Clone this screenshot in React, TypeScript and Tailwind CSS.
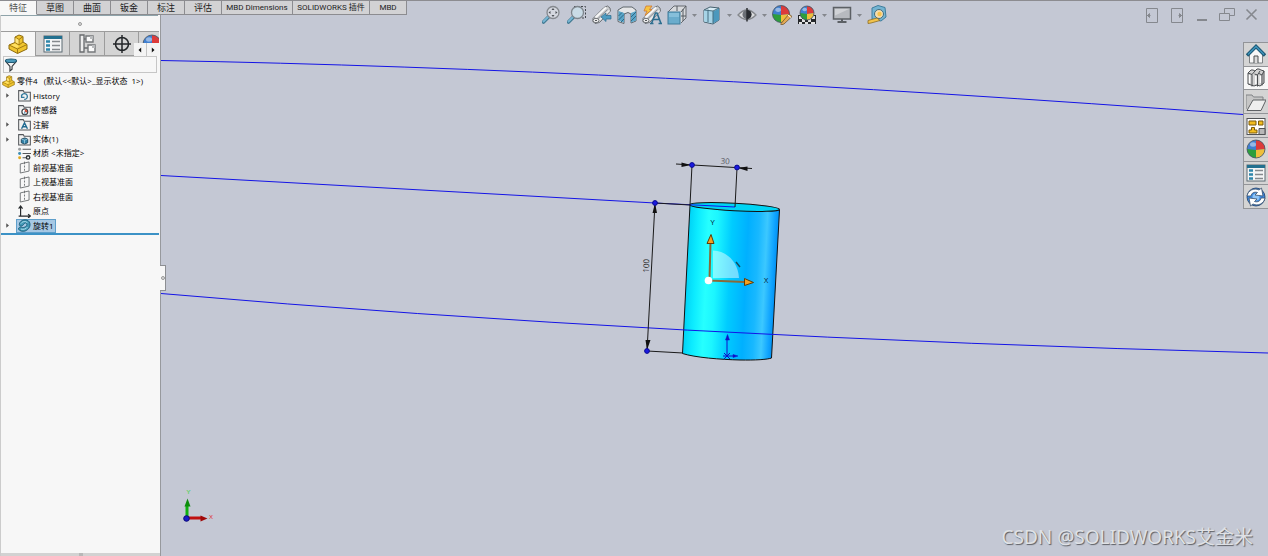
import { useState } from "react";
import type { ReactNode } from "react";

const commandTabs = [
  { label: "特征", width: "w-[37px]" },
  { label: "草图", width: "w-[37px]" },
  { label: "曲面", width: "w-[37px]" },
  { label: "钣金", width: "w-[37px]" },
  { label: "标注", width: "w-[37px]" },
  { label: "评估", width: "w-[37px]" },
  { label: "MBD Dimensions", width: "w-[71px]", latin: true },
  { label: "SOLIDWORKS 插件", width: "w-[77px]", latin: true },
  { label: "MBD", width: "w-[37px]", latin: true },
];

function Icon({ children, size = "size-5" }: { children: ReactNode; size?: string }) {
  return (
    <svg viewBox="0 0 20 20" className={`${size} shrink-0`} fill="none" aria-hidden="true">
      {children}
    </svg>
  );
}

/* shared drawings */

const Paper = () => (
  <>
    <path d="M1 13.500 12 2.500 15.500 1l2.500 2 .5 3L7.500 17.500l-4.500 1-2-2z" fill="#c9cbce" stroke="#6f7276" />
    <path d="M3.500 12.500 14 2.500" stroke="#f8f8f8" strokeWidth="2" />
    <path d="M7 15.500 17.500 5.500" stroke="#f0f0f0" strokeWidth="1.500" />
    <path d="M5 14.500 15.500 4.500" stroke="#8d9095" />
    <ellipse cx="4" cy="15.500" rx="3" ry="2.200" fill="#eeeeee" stroke="#6f7276" />
    <path d="M3 15.500h2" stroke="#55585c" />
  </>
);

const Ball = ({ cx = 10, cy = 10, r = 9 }: { cx?: number; cy?: number; r?: number }) => (
  <>
    <circle cx={cx} cy={cy} r={r} fill="#3f7fd0" />
    <path d={`M${cx} ${cy - r}A${r} ${r} 0 0 1 ${cx + r} ${cy}L${cx} ${cy + 1}z`} fill="#dc3b3b" />
    <path d={`M${cx + r} ${cy}A${r} ${r} 0 0 1 ${cx} ${cy + r}V${cy + 1}z`} fill="#eebf3c" />
    <path d={`M${cx} ${cy + r}A${r} ${r} 0 0 1 ${cx - r} ${cy}L${cx} ${cy + 1}z`} fill="#2d9e3c" />
    <ellipse cx={cx - r / 3} cy={cy - r / 2} rx={r / 3} ry={r / 4} fill="#fff" opacity=".45" />
    <circle cx={cx} cy={cy} r={r} stroke="#4c5560" strokeWidth=".8" />
  </>
);

const PartShape = () => (
  <>
    <path d="M1 11 7 8.500V3L11 1l4 1.500v5.500l4 2.500v4.500L9.500 19.500 1 15z" fill="#f0c52f" stroke="#8d6a0c" />
    <path d="M7 3 11 5.500l4-3M11 5.500V11M7 8.500 11 11l4-3M1 11l8.500 4L19 10.500M9.500 15v4.500" stroke="#a07b14" />
    <path d="M7.500 4l3 1.800V10L7.500 8.200z" fill="#ffe680" />
    <path d="M3 11l4-1.500 4 2.500-2 2z" fill="#ffe062" />
  </>
);

const FolderShape = () => (
  <path d="M1 18.500V2.500h7L9.500 5H19v13.500z" fill="#f2f2f2" stroke="#55585c" strokeWidth="1.600" />
);

const PropertyShape = () => (
  <>
    <rect x="1" y="2" width="18" height="16" fill="#f4f5f6" stroke="#5d6a73" />
    <path d="M1 3.500h18" stroke="#23708f" strokeWidth="3" />
    <path d="M3 7.500h4M3 11.500h4M3 15.500h4" stroke="#2f86ab" strokeWidth="2.600" />
    <path d="M9 7.500h8M9 11.500h8M9 15.500h8" stroke="#85898d" strokeWidth="1.300" />
  </>
);

const LensHandle = () => (
  <>
    <path d="M1.500 17 6.500 12" stroke="#3f7891" strokeWidth="3.600" strokeLinecap="round" />
    <path d="M1.500 16.500 6 12" stroke="#78b6d4" strokeWidth="2" strokeLinecap="round" />
  </>
);

/* heads-up view toolbar */

const viewTools = [
  {
    label: "整屏显示全图",
    icon: (
      <>
        <LensHandle />
        <circle cx="11" cy="7.500" r="6" fill="#d4d7df" stroke="#85898f" strokeWidth="1.300" />
        <path d="M11 3 9.500 5h3zM11 12 9.500 10h3zM6.500 7.500l2-1.500v3zM15.500 7.500l-2-1.500v3z" fill="#4c5056" />
      </>
    ),
  },
  {
    label: "局部放大",
    icon: (
      <>
        <path d="M7 1.500h11.500v11.500H15" stroke="#43474c" strokeDasharray="2 1.500" />
        <LensHandle />
        <circle cx="10.500" cy="7.500" r="6" fill="#c9dbe6" stroke="#7e858c" strokeWidth="1.300" />
      </>
    ),
  },
  {
    label: "上一视图",
    icon: (
      <>
        <Paper />
        <path d="M9 12l5-4v2.500h5v3.500h-5V16.500z" fill="#4f9cc2" stroke="#2d6c8c" strokeWidth=".7" />
      </>
    ),
  },
  {
    label: "剖面视图",
    icon: (
      <>
        <path d="M1 5 6 2h9l4 3v11l-5 2V9l-3-1.500L7 9v9.500l-6-2z" fill="#e4e5e7" stroke="#5f676d" />
        <path d="M1.500 6 7 8v9.500l-5.500-2zM14 8l5-2v9.500l-5 2z" fill="#5ba5c8" />
        <path d="M1.500 11 5 7.500M1.500 15 7 9.500M4 17l3-3M14 12l5-5M14 16l5-5" stroke="#2c6986" />
      </>
    ),
  },
  {
    label: "动态注解视图",
    icon: (
      <>
        <Paper />
        <path d="M4 1h6L7.500 4.500H10L3 10.500 5 6H2z" fill="#f6c443" stroke="#d17932" strokeWidth=".8" />
        <path d="M9.500 18.500 13.500 8h1.500l4 10.500M11 14.500h6.500M8 18.500h3.500M16.500 18.500H20" stroke="#2d6e8f" strokeWidth="1.600" />
      </>
    ),
  },
  {
    label: "视图定向",
    menu: true,
    icon: (
      <>
        <path d="M1 7 7 1h12v12l-5 5" fill="#d7d9dc" stroke="#666b71" />
        <path d="M14 7l5-6M10 1v5M14 11h5M16 4v12" stroke="#555a60" />
        <rect x="1" y="7" width="12" height="12" fill="#6aaccc" stroke="#3f7c9b" />
        <path d="M2 8h10v4H2z" fill="#86bfda" />
      </>
    ),
  },
  {
    label: "显示样式",
    menu: true,
    icon: (
      <>
        <path d="M2 5 8 2l9 1v12l-6 4-9-2z" fill="#d9edf6" stroke="#46606e" />
        <path d="M2 5l9 1v12.500L2 16.500z" fill="#a6d3e6" />
        <path d="M11 6.500 17 3.500V15l-6 3.500z" fill="#4b98bd" />
        <path d="M2 5l9 1 6-3M11 6v13M6 4.500v13" stroke="#476f82" />
      </>
    ),
  },
  {
    label: "隐藏/显示项目",
    menu: true,
    icon: (
      <>
        <path d="M1 10Q10 0 19 10 10 19 1 10z" fill="#dadbdd" stroke="#85888d" strokeWidth="1.300" />
        <circle cx="10" cy="9.500" r="4.500" fill="#6c7076" />
        <path d="M10 3v13.500" stroke="#2c2f33" strokeWidth="1.500" />
        <path d="M10 5a4.500 4.500 0 0 1 0 9" fill="#292c31" />
      </>
    ),
  },
  {
    label: "编辑外观",
    icon: (
      <>
        <Ball cx={9} cy={9} r={8.5} />
        <path d="M9 18.500 17 9l3 2.500-8 7.500-3 1z" fill="#e4aa55" stroke="#6f5530" strokeWidth=".8" />
        <path d="M16 10l3 2.500" stroke="#fff" />
      </>
    ),
  },
  {
    label: "应用布景",
    menu: true,
    icon: (
      <>
        <path d="M1 10h18v9H1z" fill="#25282b" />
        <path d="M2 11h3v3H2zM15 11h3v3h-3zM5 14h3v3H5zM11 14h3v3h-3zM2 17h3v2H2zM8 17h3v2H8zM14 17h4v2h-4z" fill="#e2e2e2" />
        <Ball cx={10} cy={8} r={7} />
      </>
    ),
  },
  {
    label: "视图设定",
    menu: true,
    icon: (
      <>
        <rect x="1.500" y="2.500" width="17" height="11.500" fill="#b7babf" stroke="#5c6065" strokeWidth="1.500" />
        <path d="M3 4h14L3 10.500z" fill="#d0d2d6" />
        <path d="M10 14v3M5.500 17h9" stroke="#5c6065" strokeWidth="2" />
      </>
    ),
  },
  {
    label: "测量",
    icon: (
      <>
        <path d="M5 3l6-2.500 7 2L19 12l-5 4-9-2z" fill="#74b4d2" stroke="#3e7e9d" />
        <circle cx="12" cy="9" r="4.500" fill="#f3ddb0" stroke="#3f6c80" />
        <circle cx="12.500" cy="9" r="2.200" fill="#f8c34c" />
        <path d="M1 18.500v-3l9-2.500 3 2.500-9 2.500z" fill="#f2c34b" stroke="#8b6c23" strokeWidth=".8" />
      </>
    ),
  },
];

const windowButtons = [
  {
    label: "左侧面板",
    icon: <path d="M4.500 3.500h11v14h-11zM5 10.500h3.500M5.500 10.500l2-2v4z" />,
  },
  {
    label: "右侧面板",
    icon: <path d="M4.500 3.500h11v14h-11zM15 10.500h-3.500M14.500 10.500l-2-2v4z" />,
  },
  { label: "最小化", icon: <path d="M5 15h10" strokeWidth="2" /> },
  {
    label: "向下还原",
    icon: <path d="M2.500 8.500h10v7h-10zM7.500 8.500v-5h10v7h-5" />,
  },
  { label: "关闭", icon: <path d="M4.500 4.500l10 10M14.500 4.500l-10 10" strokeWidth="1.600" /> },
];

const taskPane = [
  {
    label: "SOLIDWORKS 资源",
    icon: (
      <>
        <path d="M3.500 10v9h13v-9L10 4z" fill="#f7f7f7" stroke="#7d8184" />
        <path d="M1 11.500 10 2.500l9 9" stroke="#1c5875" strokeWidth="3.400" />
        <path d="M2 10.500 10 2.500l8 8" stroke="#3f96bd" strokeWidth="1.300" />
        <path d="M8 19v-7h4v7" fill="#dadada" stroke="#4b4e50" />
      </>
    ),
  },
  {
    label: "设计库",
    icon: (
      <>
        <path d="M2 5l3-3h2l2 1 2-2h2l2 1 3 1v12l-4 3-3-1-3 1-3-1-3-1z" fill="#d2d2d2" stroke="#4a4d50" />
        <path d="M2 5l4 1.500v12M6 6.500 9 3M8.500 6l3 1v11.500M11.500 7 14 3M13 5.500l3 1.500v10.500M16 7l2-4" stroke="#4a4d50" />
        <path d="M3.500 7v8M9.800 8v8M14.300 8v7" stroke="#fff" strokeWidth="1.300" />
      </>
    ),
  },
  {
    label: "文件探索器",
    icon: (
      <>
        <path d="M0 17V3h6l1.500 2H17v4" fill="#c6c6c6" stroke="#808386" />
        <path d="M1 18.500 7 8h13l-5 10.500z" fill="#eeeeee" stroke="#5f6265" />
      </>
    ),
  },
  {
    label: "视图调色板",
    icon: (
      <>
        <rect x="1" y="2.500" width="18" height="16" fill="#fff" stroke="#505356" />
        <path d="M3 5h7v4H3zM12.500 5H17v4h-4.500zM5.500 11.500h3v2.500H11v3H3v-3h2.500z" fill="#f2bd20" stroke="#7b5b0c" />
        <path d="M13 18.500v-6h6v6z" fill="#b8b8b8" stroke="#505356" />
      </>
    ),
  },
  { label: "外观、布景和贴图", icon: <Ball /> },
  { label: "自定义属性", icon: <PropertyShape /> },
  {
    label: "论坛",
    icon: (
      <>
        <circle cx="10" cy="10" r="9" fill="#3f8ade" stroke="#1c3c68" strokeWidth=".8" />
        <circle cx="10" cy="10" r="3.500" fill="#8fc4f5" />
        <path d="M1 9C2 3.500 8 .5 13 3l2.500-2 1.500 8-8-1 2.500-2.500C8 4.500 5.500 6 5 9z" fill="#fff" stroke="#38516d" strokeWidth=".8" />
        <path d="M19 11c-1 5.500-7 8.500-12 6l-2.500 2L3 11l8 1-2.500 2.500c3.500 1 6-.5 6.500-3.500z" fill="#fff" stroke="#38516d" strokeWidth=".8" />
      </>
    ),
  },
];

/* FeatureManager */

const PlaneIcon = (
  <path d="M3.500 4.500 17 1.500v14l-13.500 3zM10 1v4M10 7v3M10 12v3" stroke="#6b6e71" strokeWidth="1.400" />
);

const treeItems = [
  {
    label: "History",
    expandable: true,
    icon: (
      <>
        <FolderShape />
        <path d="M5.500 12.500a4.500 4.500 0 1 1 4 3.500M5.500 8.500v4.500h4.500" stroke="#31799c" strokeWidth="2" />
      </>
    ),
  },
  {
    label: "传感器",
    icon: (
      <>
        <FolderShape />
        <circle cx="10.500" cy="12" r="4.500" fill="#fff" stroke="#3b4247" strokeWidth="1.800" />
        <path d="M10.500 8a4 4 0 0 1 3.500 5l-3.500-1z" fill="#d9482f" />
        <path d="M10.500 11.500V15" stroke="#2d7396" strokeWidth="1.500" />
      </>
    ),
  },
  {
    label: "注解",
    expandable: true,
    icon: (
      <>
        <FolderShape />
        <path d="M5.500 16.500 10 7.500l4.500 9M7.500 13.500h5.500" stroke="#216b91" strokeWidth="2.200" />
      </>
    ),
  },
  {
    label: "实体(1)",
    expandable: true,
    icon: (
      <>
        <FolderShape />
        <path d="M5 9.500 10.500 7.500l4.500 2v5.500l-5 2-5-2z" fill="#3181a7" stroke="#173f54" strokeWidth="1.300" />
        <path d="M5.500 9.500 10 11l4.500-1.500M10 11v5" stroke="#b8deee" />
      </>
    ),
  },
  {
    label: "材质 <未指定>",
    icon: (
      <>
        <path d="M7 3.500h13M7 10h13M7 16.500h6" stroke="#55585b" strokeWidth="1.800" />
        <circle cx="2.500" cy="3.500" r="2.300" fill="#9b9ea1" />
        <circle cx="2.500" cy="10" r="2.300" fill="#3c8eb5" />
        <circle cx="2.500" cy="16.500" r="2.300" fill="#e0a91f" />
        <circle cx="15.500" cy="16" r="2.600" stroke="#33373a" strokeWidth="2.200" />
      </>
    ),
  },
  { label: "前视基准面", icon: PlaneIcon },
  { label: "上视基准面", icon: PlaneIcon },
  { label: "右视基准面", icon: PlaneIcon },
  {
    label: "原点",
    icon: (
      <path d="M4 2v15h15M1 5.500 4 1.500l3 4M15.500 14l3.500 3-3.500 3M1 17h4" stroke="#26292c" strokeWidth="1.800" />
    ),
  },
  {
    label: "旋转1",
    expandable: true,
    icon: (
      <>
        <path d="M2 8C3 1 14-1 17.500 4.500 21 11 15 19 8 19c-6 0-9-4-6-6 2-2 4 1 7 0 5-1 6-6 3-7-3 0-4 5-7 5-2 0-3-1-3-3z" fill="#4197b5" stroke="#155773" strokeWidth="1.300" />
        <path d="M4.500 7c3-4 8-4 10-1M4.500 15.500c4 1 8 0 10-3" stroke="#b4e2ef" strokeWidth="1.500" />
      </>
    ),
  },
];

const panelTabs = [
  { label: "FeatureManager 设计树", width: "w-[35px]", icon: <PartShape /> },
  { label: "PropertyManager", width: "w-[34px]", icon: <PropertyShape /> },
  {
    label: "ConfigurationManager",
    width: "w-[35px]",
    icon: (
      <>
        <path d="M3 1h4v17H3zM7 5h4M7 14h6" fill="#eee" stroke="#686b6e" strokeWidth="1.300" />
        <path d="M9 2h7v6H9zM11 11h7v7h-7z" fill="#fafafa" stroke="#75787b" strokeWidth="1.400" />
        <path d="M13 2h3v3h-3zM15 11h3v3h-3z" fill="#b9bbbd" />
      </>
    ),
  },
  {
    label: "DimXpertManager",
    width: "w-[34px]",
    icon: (
      <path d="M10 1v18M1 10h18M16.500 10a6.500 6.500 0 1 1-13 0 6.500 6.500 0 0 1 13 0z" stroke="#222528" strokeWidth="1.500" />
    ),
  },
  { label: "DisplayManager", width: "w-[21px]", icon: <Ball cx={13} cy={10} /> },
];

function FeaturePanel() {
  const [selected, setSelected] = useState("旋转1");
  const [filter, setFilter] = useState("");

  return (
    <aside className="relative col-start-1 row-start-2 flex flex-col border-l border-r border-l-[#cccccc] border-r-[#97999d] bg-[#f7f7f7]">
      <div className="mr-[2px] flex h-[16px] items-center justify-center border-t border-[#8ea3aa]">
        <span className="size-[4px] rounded-full border border-[#999999] bg-[#dddddd]" />
      </div>
      <div className="relative mr-px flex h-[25px] overflow-hidden border-t border-[#9c9c9c]">
        {panelTabs.map((tab, i) => (
          <button
            key={tab.label}
            aria-label={tab.label}
            className={`flex shrink-0 items-center justify-center overflow-hidden border-r border-[#9c9c9c] ${tab.width} ${
              i === 0 ? "bg-[#f7f7f7]" : "border-b bg-[#d4d4d4]"
            }`}
          >
            <Icon>{tab.icon}</Icon>
          </button>
        ))}
        <div className="absolute right-0 bottom-0 flex h-[13px] gap-px bg-[#c4c4c4]">
          <button aria-label="上一个" className="flex w-[12px] items-center justify-center bg-[#f4f4f4]">
            <Icon size="size-[6px]">
              <path d="M14 2v16L5 10z" fill="#111" />
            </Icon>
          </button>
          <button aria-label="下一个" className="flex w-[12px] items-center justify-center bg-[#f4f4f4]">
            <Icon size="size-[6px]">
              <path d="M6 2v16l9-8z" fill="#111" />
            </Icon>
          </button>
        </div>
      </div>
      <label className="mr-[3px] ml-[2px] flex h-[17px] items-center border border-[#c6c6c6]">
        <Icon size="size-[14px]">
          <path d="M2 4.500 8.500 12v6.500l3-2.500v-4L18 4.500" fill="#f4f4f4" stroke="#33383c" strokeWidth="1.600" />
          <ellipse cx="10" cy="4" rx="8" ry="2.500" fill="#4a9abb" stroke="#215a75" strokeWidth="1.500" />
        </Icon>
        <input
          aria-label="过滤"
          value={filter}
          onChange={(e) => setFilter(e.target.value)}
          className="min-w-0 flex-1 bg-transparent text-[8px] outline-none"
        />
      </label>
      <ul className="flex h-[160px] flex-col pt-px text-[8px] leading-[14px] whitespace-pre text-black">
        <li className="flex flex-1 items-center gap-[2px] pl-px">
          <Icon size="size-[13px]">
            <PartShape />
          </Icon>
          <span>零件4   (默认&lt;&lt;默认&gt;_显示状态  1&gt;)</span>
        </li>
        {treeItems.map((item) => (
          <li key={item.label} className="flex flex-1 items-center">
            {item.expandable ? (
              <button aria-label={`展开 ${item.label}`} className="flex w-[15px] items-center pl-[4px]">
                <Icon size="size-[5px]">
                  <path d="M5 1v18l11-9z" fill="#555" />
                </Icon>
              </button>
            ) : (
              <span className="w-[15px]" />
            )}
            <button
              onClick={() => setSelected(item.label)}
              className={`flex h-[14px] items-center gap-[2px] border px-px ${
                selected === item.label ? "border-[#5f9fcb] bg-[#a6c8e4]" : "border-transparent"
              }`}
            >
              <Icon size="size-[13px]">{item.icon}</Icon>
              <span>{item.label}</span>
            </button>
          </li>
        ))}
      </ul>
      <div className="mr-px h-[2px] bg-[#3c92c6]" />
      <div className="mt-auto flex h-[3px] justify-center bg-[#d2d2d2]">
        <span className="w-[4px] bg-[#b8b8b8]" />
      </div>
      <button
        aria-label="折叠面板"
        className="absolute top-[250px] -right-[6px] flex h-[26px] w-[6px] items-center justify-center border-y border-r border-[#8c8e92] bg-[#f7f7f7]"
      >
        <span className="size-[4px] rounded-full border border-[#999999] bg-[#dddddd]" />
      </button>
    </aside>
  );
}

function Scene() {
  return (
    <svg
      viewBox="0 0 1268 556"
      preserveAspectRatio="xMidYMid slice"
      className="absolute inset-0 h-full w-full"
      fill="none"
      aria-hidden="true"
    >
      <defs>
        <linearGradient id="body" gradientUnits="userSpaceOnUse" x1="686" y1="280" x2="776" y2="284.500">
          <stop offset="0" stopColor="#00d2f6" />
          <stop offset=".1" stopColor="#0cebff" />
          <stop offset=".22" stopColor="#26ffff" />
          <stop offset=".32" stopColor="#1cf6ff" />
          <stop offset=".48" stopColor="#00ccff" />
          <stop offset=".66" stopColor="#00b0ff" />
          <stop offset=".78" stopColor="#18b8ff" />
          <stop offset=".87" stopColor="#3cc8ff" />
          <stop offset=".95" stopColor="#10a4ff" />
          <stop offset="1" stopColor="#008ef0" />
        </linearGradient>
      </defs>

      {/* cylinder */}
      <path
        d="M690 205 682.500 353.500C695 357.500 720 359.500 740 360 755 360.300 768 359.500 771.500 358L779.500 210z"
        fill="url(#body)"
        stroke="#111"
      />
      <ellipse cx="734.500" cy="207" rx="45" ry="3.800" transform="rotate(3 734.500 207)" fill="#00d4f4" stroke="#111" />

      {/* temporary curves */}
      <g stroke="#1414e6">
        <path d="M161 60.500Q629 69 1243 114.500" />
        <path d="M161 175.500 655 203 735 207" />
        <path d="M161 293.500Q661 337 1268 353" />
      </g>

      {/* dimensions */}
      <g stroke="#1a1a1a">
        <path d="M676 164 752 168.500M692 165 690 205M737 168 735 207" />
        <path d="M655 203 647 351 683 353M655 203l35 2" />
      </g>
      <g fill="#111">
        <path d="M691 165l-9.500-2.500v4.500zM738 168l9.500-1.500v4.500zM655 203l-2.500 10h4.500zM647 350l-1.500-10h5z" />
      </g>
      <g fill="#1a1ae0" stroke="#0a0a90">
        <circle cx="692" cy="165" r="2.400" />
        <circle cx="737" cy="167.500" r="2.400" />
        <circle cx="655" cy="203" r="2.400" />
        <circle cx="647" cy="351" r="2.400" />
      </g>
      <g fill="#55565c" fontFamily="Open Sans, sans-serif" fontSize="8" textAnchor="middle">
        <text x="725" y="164" transform="rotate(3 725 164)">30</text>
        <text x="649" y="266" transform="rotate(-87 649 266)" fill="#222">100</text>
      </g>

      {/* sketch origin */}
      <g stroke="#1010c8">
        <path d="M727 356V338M723 356h12M724 353l6 6M730 353l-6 6" />
        <path d="M727.500 334.500 725.500 340h4zM738 356l-5-1.500v3z" fill="#1010c8" strokeWidth=".5" />
      </g>

      {/* manipulator */}
      <path d="M713 278V250.500C727 251 738 262 739 278z" fill="#fff" opacity=".45" />
      <path d="M709.500 280 710.500 242M709 280.500l36 1.500" stroke="#8a6a38" strokeWidth="2" />
      <path d="M711 234.500 707 243.500h7zM753.500 282.500l-9-4v7z" fill="#f5a01e" stroke="#5d3c08" />
      <circle cx="708.500" cy="280.500" r="3.800" fill="#fff" />
      <path d="M736 262l4 5" stroke="#164a5c" strokeWidth="1.500" />
      <g fontFamily="Liberation Sans, sans-serif" fontSize="7" textAnchor="middle" fill="#08263a">
        <text x="712.500" y="225">Y</text>
        <text x="766" y="283">X</text>
      </g>

      {/* view triad */}
      <path d="M187 518V506" stroke="#10b010" strokeWidth="3" />
      <path d="M187.500 498.500 184.500 506.500h6z" fill="#0c8c0c" />
      <path d="M187 518h14" stroke="#c01010" strokeWidth="3" />
      <path d="M207.500 518.500l-7-3v6z" fill="#a00808" />
      <circle cx="186.500" cy="518.500" r="2.800" fill="#1a1ac8" stroke="#0a0a78" />
      <g fontFamily="Liberation Sans, sans-serif" fontSize="6" textAnchor="middle">
        <text x="188.500" y="494" fill="#2ad42a">Y</text>
        <text x="211" y="519" fill="#e03030">X</text>
      </g>
    </svg>
  );
}

export default function App() {
  const [activeTab, setActiveTab] = useState("特征");
  const [activePane, setActivePane] = useState("设计库");

  return (
    <div className="relative grid min-h-screen grid-cols-[161px_1fr] grid-rows-[15px_1fr] overflow-hidden bg-[#c4c8d4] font-['Open_Sans','Noto_Sans_CJK_SC',sans-serif]">
      <Scene />

      <nav className="relative z-10 col-span-2 col-start-1 row-start-1 flex justify-self-start border-t border-[#8c8c90]">
        {commandTabs.map((tab) => (
          <button
            key={tab.label}
            onClick={() => setActiveTab(tab.label)}
            className={`flex items-center justify-center border-r border-b border-[#8c8c90] whitespace-nowrap ${tab.width} ${
              tab.latin ? "font-[Roboto,'Noto_Sans_CJK_SC',sans-serif] text-[8px]" : "text-[9px]"
            } ${
              activeTab === tab.label
                ? "border-b-transparent bg-[#f7f7f7] text-[#555555]"
                : "bg-[#d2d2d4] text-[#1c1c1c]"
            }`}
          >
            {tab.label}
          </button>
        ))}
      </nav>

      <FeaturePanel />

      <main className="relative col-start-2 row-span-2 row-start-1 flex flex-col">
        <header className="grid grid-cols-[1fr_auto_1fr] items-center border-t border-[#8c8c90] pt-[4px]">
          <div className="col-start-2 flex items-center gap-[5px]">
            {viewTools.map((tool) => (
              <div key={tool.label} className="flex items-center gap-[5px]">
                <button aria-label={tool.label}>
                  <Icon>{tool.icon}</Icon>
                </button>
                {tool.menu && (
                  <button aria-label={`${tool.label} 选项`}>
                    <Icon size="size-[5px]">
                      <path d="M0 4h20L10 16z" fill="#84878d" />
                    </Icon>
                  </button>
                )}
              </div>
            ))}
          </div>
          <div className="flex justify-end gap-[5px] pr-[6px]">
            {windowButtons.map((button) => (
              <button key={button.label} aria-label={button.label}>
                <Icon>
                  <g stroke="#85888e">{button.icon}</g>
                </Icon>
              </button>
            ))}
          </div>
        </header>

        <div className="mt-[17px] flex h-[167px] w-[25px] flex-col self-end border-t border-l border-[#929498]">
          {taskPane.map((pane) => (
            <button
              key={pane.label}
              aria-label={pane.label}
              onClick={() => setActivePane(pane.label)}
              className={`flex flex-1 items-center justify-center border-b border-[#929498] ${
                activePane === pane.label ? "bg-[#f7f7f7]" : "bg-[#d4d4d4]"
              }`}
            >
              <Icon>{pane.icon}</Icon>
            </button>
          ))}
        </div>

        <p className="mt-auto self-end pr-[15px] pb-[5px] font-['Noto_Sans','Noto_Sans_CJK_SC',sans-serif] text-[19px] leading-[28px] text-[#dfe1e5] [text-shadow:1px_1px_1px_#5c5e64]">
          CSDN @SOLIDWORKS艾金米
        </p>
      </main>
    </div>
  );
}
